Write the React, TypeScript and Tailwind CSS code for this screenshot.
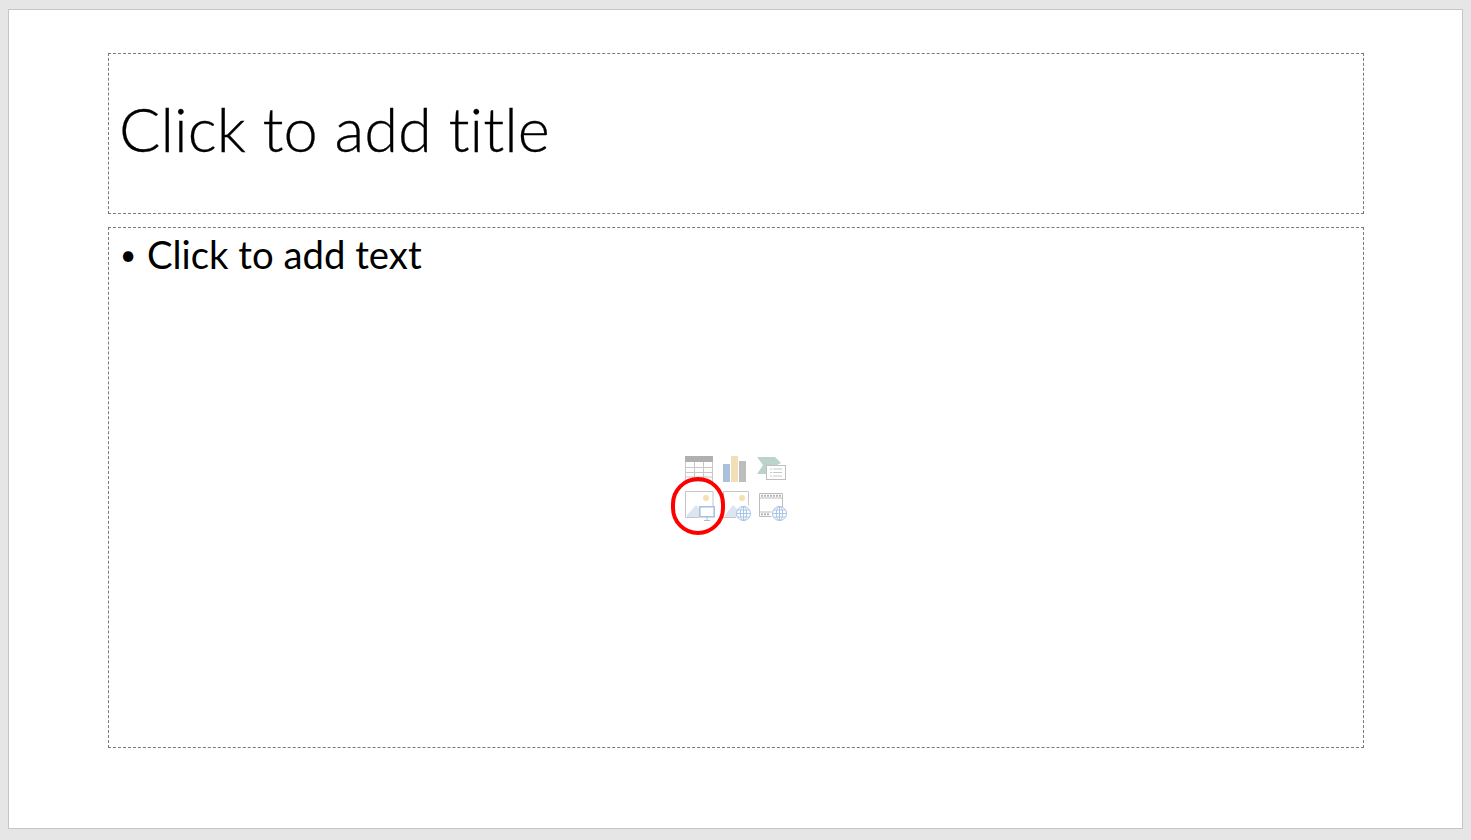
const Table = () => (
  <svg width="30" height="28" viewBox="0 0 30 28" fill="none">
    <rect x="0" y="0" width="28" height="6" fill="#b0b0b0" />
    <path d="M.5 6v19.5h27V6M.5 11.5h27M.5 16.5h27M.5 21h27M9.5 6v19.5M18.5 6v19.5" stroke="#c8c8c8" />
  </svg>
);

const Chart = () => (
  <svg width="28" height="28" viewBox="0 0 28 28">
    <rect x="0" y="8" width="7" height="18" fill="#a9c1dc" />
    <rect x="8" y="0" width="7" height="26" fill="#f3dfb6" />
    <rect x="16" y="5" width="7" height="21" fill="#bdbdbd" />
  </svg>
);

const SmartArt = () => (
  <svg width="30" height="28" viewBox="0 0 30 28" fill="none">
    <path d="M0 1h18l6 6-4 2H9v9H0l6-9z" fill="#bcd3ca" />
    <rect x="9.5" y="9.5" width="19" height="14" fill="#fff" stroke="#bfbfbf" />
    <path d="M13 13h2M16 13h9M13 16.5h2M16 16.5h9M13 20h2M16 20h9" stroke="#c8c8c8" />
  </svg>
);

const Picture = () => (
  <svg width="32" height="32" viewBox="0 0 32 32" fill="none">
    <path d="M.5 26.5V.5h27.5v15M.5 26.5H14" stroke="#c6c6c6" />
    <circle cx="21" cy="7" r="3" fill="#f7dfb4" />
    <path d="M2 26v-2l9-10 4 4v8z" fill="#dde5f0" />
    <rect x="14.8" y="15.8" width="14.4" height="10" fill="#fff" stroke="#a3bfe0" strokeWidth="1.5" />
    <path d="M22 26v3M19 29.5h6" stroke="#a3bfe0" />
  </svg>
);

const Globe = ({ x, y }: { x: number; y: number }) => (
  <g transform={`translate(${x} ${y})`} stroke="#a9c4e4" fill="#fff">
    <circle cx="7.5" cy="7.5" r="7" />
    <ellipse cx="7.5" cy="7.5" rx="3.2" ry="7" fill="none" />
    <path d="M.5 7.5h14M1.5 4h12M1.5 11h12M7.5 .5v14" fill="none" />
  </g>
);

const OnlinePicture = () => (
  <svg width="30" height="32" viewBox="0 0 30 32" fill="none">
    <path d="M.5 26.5V.5h25v14M.5 26.5H13" stroke="#c6c6c6" />
    <circle cx="19" cy="7" r="3" fill="#f7dfb4" />
    <path d="M2 26v-2l8-10 5 5v7z" fill="#dde5f0" />
    <Globe x={13} y={15} />
  </svg>
);

const Video = () => (
  <svg width="30" height="32" viewBox="0 0 30 32" fill="none">
    <path d="M2.5 2.5h23v14M2.5 2.5v23h12M2.5 7h23M2.5 21h12" stroke="#bdbdbd" />
    <path d="M4 4.8h20M4 23.2h9" stroke="#b4b4b4" strokeWidth="2" strokeDasharray="2 1" />
    <Globe x={15} y={15} />
  </svg>
);

export default function App() {
  return (
    <div className="h-[840px] w-[1471px] overflow-hidden bg-[#e6e6e6] pl-2 pt-[9px] font-['Lato',sans-serif] text-black">
      <div className="flex h-[820px] w-[1455px] flex-col gap-[13px] border border-[#c6c6c6] bg-white pl-[99px] pr-[98px] pt-[43px]">
        <div className="flex h-[161px] items-center border border-dashed border-[#7a7a7a] pb-[10px] pl-[10px]">
          <h1 className="text-[61.4px] font-light leading-none [font-variant-ligatures:none] [-webkit-text-stroke:0.3px_#000]">Click to add title</h1>
        </div>

        <div className="relative h-[521px] border border-dashed border-[#7a7a7a] pl-[11px] pt-[3px]">
          <p className="flex items-center text-[38.3px] leading-[47px]">
            <span className="w-[27px] text-[28px]">•</span>
            Click to add text
          </p>

          <div className="absolute left-[576px] top-[228px] grid w-[108px] grid-cols-[38px_34px_30px] gap-y-[7px]">
            <Table />
            <Chart />
            <SmartArt />
            <Picture />
            <OnlinePicture />
            <Video />
          </div>

          <div className="absolute left-[562px] top-[249px] h-[58px] w-[54px] rounded-full border-[4.5px] border-[#ff0000]" />
        </div>
      </div>
    </div>
  );
}
